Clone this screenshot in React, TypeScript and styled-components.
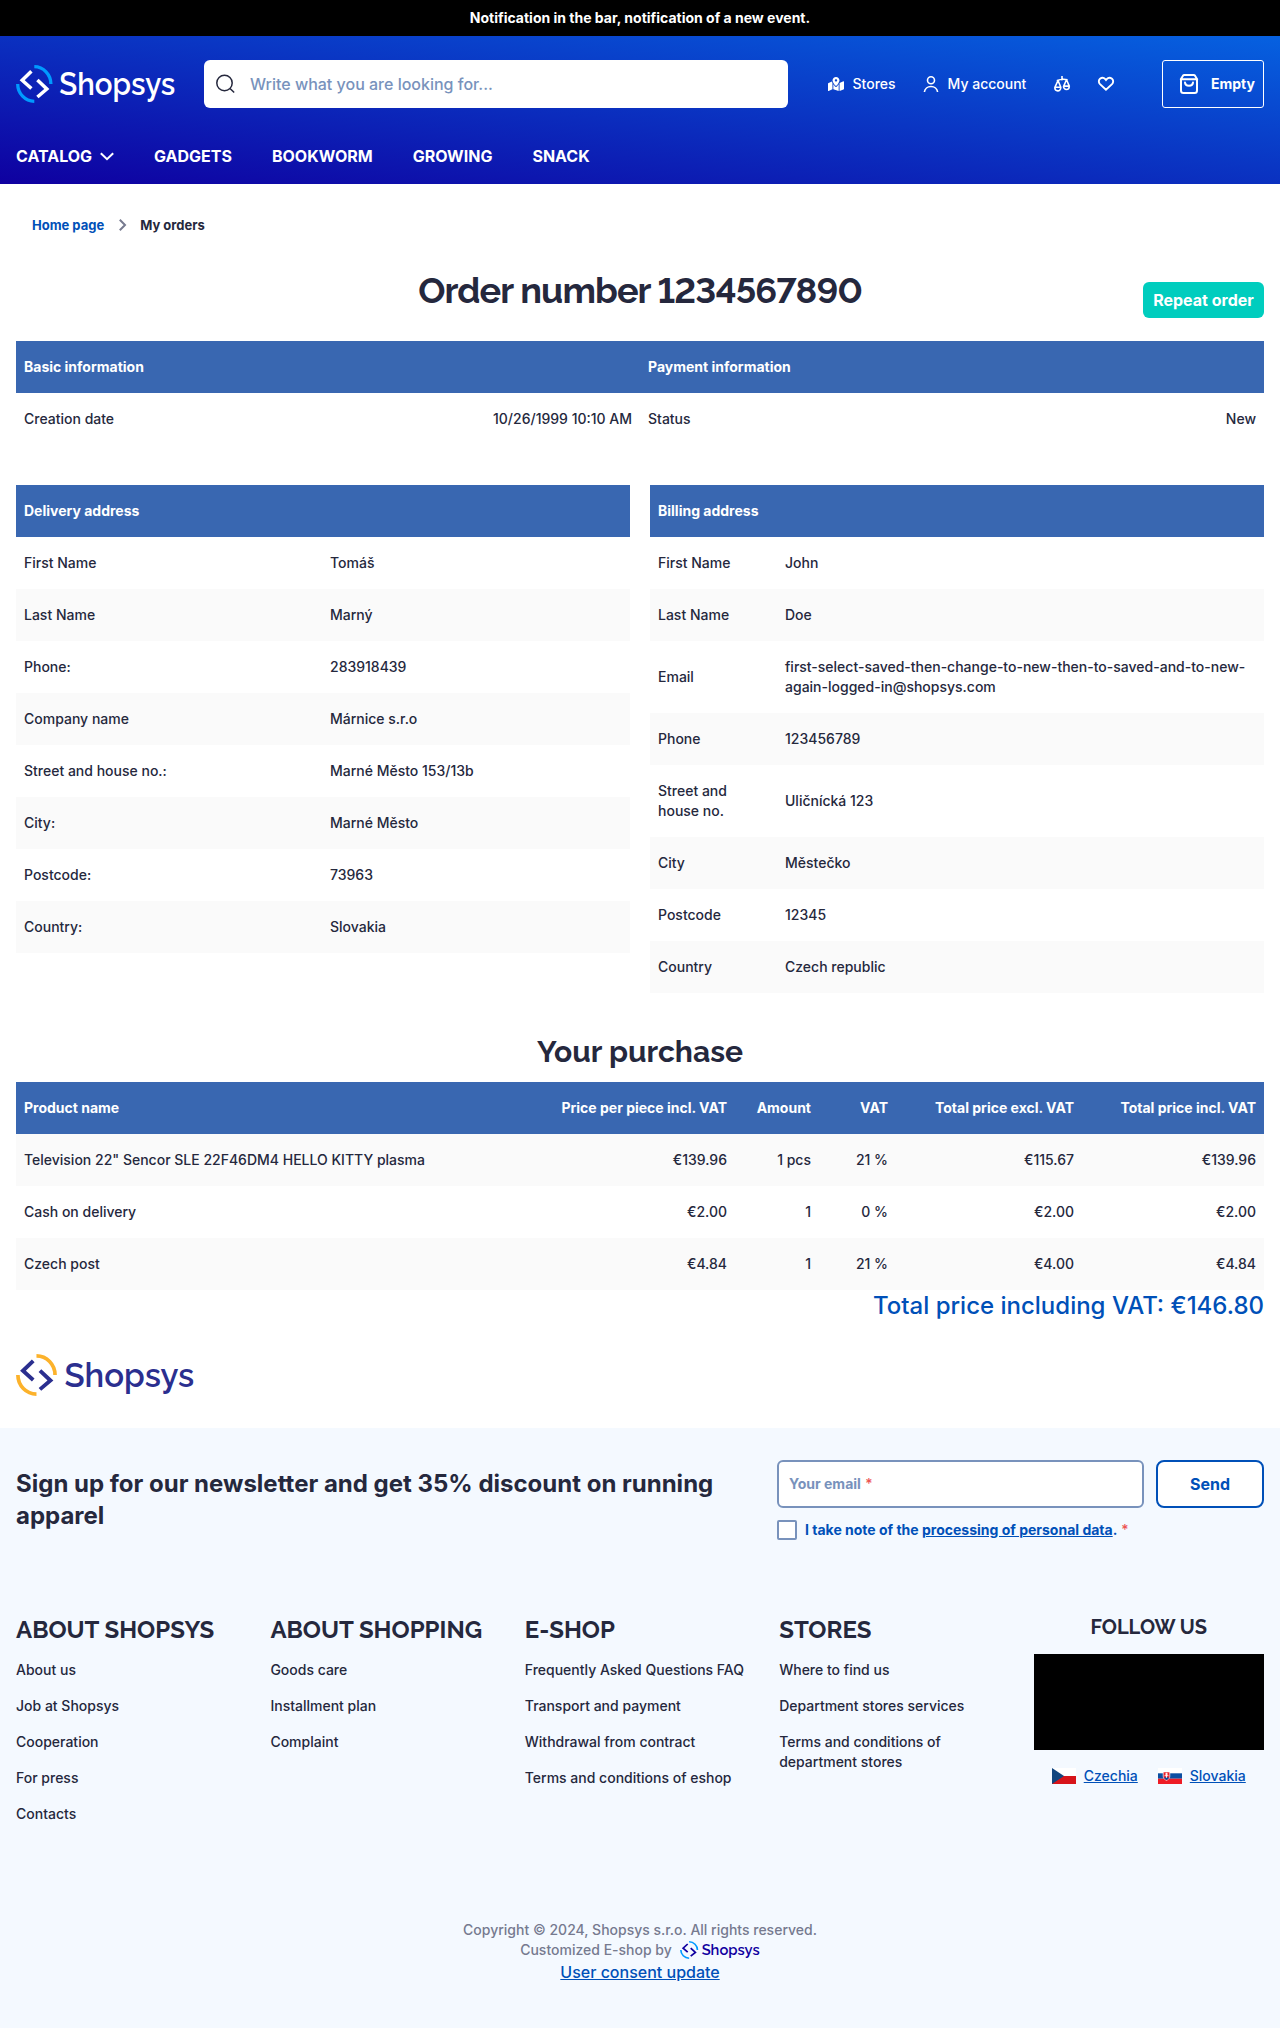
import React from 'react';
import styled, { createGlobalStyle } from 'styled-components';
import { FaMapMarkedAlt } from 'react-icons/fa';

const ink = '#25283d';
const link = '#0050b8';
const muted = '#7892bc';
const display = "Raleway, Lato, 'Open Sans', sans-serif";

const GlobalStyle = createGlobalStyle`
  *, *::before, *::after { box-sizing: border-box; }
  body {
    margin: 0;
    background: #fff;
    color: ${ink};
    font: 500 14px/20px Inter, 'Liberation Sans', sans-serif;
  }
  a { color: inherit; text-decoration: none; }
  h1, h2, h3, p, ul { margin: 0; padding: 0; }
  ul { list-style: none; }
  svg { display: block; flex: none; overflow: visible; }
`;

const Page = styled.div`
  width: 1280px;
  min-height: 2028px;
  display: flex;
  flex-direction: column;
`;

const Notification = styled.div`
  height: 36px;
  background: #000;
  color: #fff;
  font-weight: 700;
  line-height: 36px;
  text-align: center;
`;

const Header = styled.header`
  height: 148px;
  padding: 24px 16px 0;
  color: #fff;
  background: linear-gradient(to top right, #0f00a0 0%, #0661e0 100%);
`;

const HeaderTop = styled.div`
  display: flex;
  align-items: center;
  height: 48px;
`;

const Search = styled.label`
  display: flex;
  align-items: center;
  width: 584px;
  height: 48px;
  margin-left: 28px;
  padding-left: 12px;
  border-radius: 6px;
  background: #fff;
  color: ${ink};
`;

const SearchInput = styled.input`
  flex: 1;
  margin-left: 14px;
  padding: 0;
  border: 0;
  outline: 0;
  background: transparent;
  font: 500 16px/24px Inter, sans-serif;
  &::placeholder { color: ${muted}; opacity: 1; }
`;

const UserMenu = styled.nav`
  flex: 1;
  display: flex;
  align-items: center;
  margin-left: 40px;
`;

const MenuLink = styled.a<{ $gap: number }>`
  display: flex;
  align-items: center;
  gap: 8.5px;
  margin-right: ${(p) => p.$gap}px;
`;

const Cart = styled.a`
  display: flex;
  align-items: center;
  width: 102px;
  height: 48px;
  margin-left: auto;
  padding-left: 16px;
  border: 1px solid #fff;
  border-radius: 3px;
  font-weight: 700;
  gap: 12px;
`;

const MainNav = styled.nav`
  display: flex;
  gap: 40px;
  margin-top: 36px;
  font-size: 16px;
  font-weight: 700;
  line-height: 24px;
  text-transform: uppercase;
`;

const NavLink = styled.a`
  display: flex;
  align-items: center;
  gap: 8px;
`;

const Breadcrumbs = styled.nav`
  display: flex;
  align-items: center;
  height: 20px;
  margin: 31px 32px 0;
  font-size: 13px;
  font-weight: 700;
`;

const CrumbLink = styled.a`
  color: ${link};
`;

const CrumbArrow = styled.svg`
  margin: 0 14px 0 15px;
`;

const Main = styled.main`
  padding: 0 16px;
`;

const TitleRow = styled.div`
  display: grid;
  grid-template-columns: 1fr auto 1fr;
  align-items: start;
  height: 74px;
  margin-top: 32px;
`;

const Title = styled.h1`
  grid-column: 2;
  font: 700 36px/46px ${display};
  font-variant-numeric: lining-nums;
  letter-spacing: -0.025em;
`;

const Repeat = styled.button`
  justify-self: end;
  height: 36px;
  width: 121px;
  margin-top: 15px;
  padding: 0;
  border: 0;
  border-radius: 6px;
  background: #00cdbe;
  color: #fff;
  font: 700 16px/24px Inter, sans-serif;
`;

const Table = styled.table`
  width: 100%;
  border-collapse: collapse;
  border-spacing: 0;
  table-layout: fixed;
`;

const Head = styled.th<{ $right?: boolean }>`
  height: 52px;
  padding: 0 8px;
  background: #3967b1;
  color: #fff;
  font-weight: 700;
  text-align: ${(p) => (p.$right ? 'right' : 'left')};
`;

const Cell = styled.td<{ $right?: boolean }>`
  padding: 16px 8px;
  text-align: ${(p) => (p.$right ? 'right' : 'left')};
`;

const Row = styled.tr<{ $shade?: boolean }>`
  background: ${(p) => (p.$shade ? '#fafafa' : '#fff')};
`;

const Addresses = styled.div`
  display: grid;
  grid-template-columns: 1fr 1fr;
  align-items: start;
  gap: 20px;
  margin-top: 40px;
`;

const PurchaseTitle = styled.h2`
  margin-top: 40px;
  margin-bottom: 11px;
  font: 700 30px/38px ${display};
  text-align: center;
`;

const Total = styled.p`
  color: ${link};
  font-size: 24px;
  line-height: 32px;
  text-align: right;
`;

const PlainLogo = styled.div`
  margin: 32px 16px;
  height: 42px;
`;

const Footer = styled.footer`
  flex: 1;
  padding: 32px 16px 0;
  background: #f4f9ff;
`;

const Newsletter = styled.section`
  display: flex;
  justify-content: space-between;
  height: 150px;
`;

const NewsTitle = styled.h2`
  width: 730px;
  margin-top: 8px;
  font-size: 24px;
  font-weight: 700;
  line-height: 32px;
`;

const NewsForm = styled.form`
  width: 487px;
`;

const FormLine = styled.div`
  display: flex;
  gap: 12px;
`;

const Email = styled.label`
  flex: 1;
  height: 48px;
  padding: 12px 10px;
  border: 2px solid ${muted};
  border-radius: 6px;
  background: #fff;
  color: ${muted};
  font-weight: 700;
`;

const Send = styled.button`
  width: 108px;
  height: 48px;
  padding: 0;
  border: 2px solid ${link};
  border-radius: 8px;
  background: #fff;
  color: ${link};
  font: 700 16px/24px Inter, sans-serif;
`;

const Consent = styled.label`
  display: flex;
  align-items: center;
  gap: 8px;
  margin-top: 12px;
  color: ${link};
  font-weight: 700;
`;

const Box = styled.span`
  width: 20px;
  height: 20px;
  border: 2px solid ${muted};
  border-radius: 2px;
  background: #fff;
`;

const Star = styled.span`
  margin-left: 1px;
  color: #ec5353;
  font-weight: 500;
`;

const Underlined = styled.a`
  text-decoration: underline;
`;

const Columns = styled.section`
  display: grid;
  grid-template-columns: repeat(5, 230.4px);
  gap: 24px;
  height: 300px;
`;

const ColumnTitle = styled.h3`
  margin-top: 4px;
  font: 700 24px/32px ${display};
  white-space: nowrap;
  text-transform: uppercase;
`;

const LinkList = styled.ul`
  display: grid;
  gap: 16px;
  margin-top: 14px;
`;

const Social = styled.div`
  display: flex;
  flex-direction: column;
  align-items: center;
`;

const SocialTitle = styled.h3`
  margin-top: 4px;
  font: 700 20px/26px ${display};
  text-transform: uppercase;
`;

const SocialBlock = styled.div`
  width: 100%;
  height: 96px;
  margin-top: 14px;
  background: #000;
`;

const Countries = styled.div`
  display: flex;
  gap: 20px;
  margin-top: 16px;
  color: ${link};
`;

const Country = styled.div`
  display: flex;
  align-items: center;
  gap: 8px;
`;

const Legal = styled.section`
  display: flex;
  flex-direction: column;
  align-items: center;
  margin-top: 10px;
  color: #767a8f;
`;

const Credit = styled.div`
  display: flex;
  align-items: center;
  gap: 8px;
`;

const ConsentUpdate = styled.a`
  color: ${link};
  font-size: 16px;
  line-height: 24px;
  text-decoration: underline;
`;

interface LogoProps {
  width: number;
  height: number;
  mark: string;
  ring: string;
}

const Logo = ({ width, height, mark, ring }: LogoProps) => (
  <svg width={width} height={height} viewBox="0 0 160 38" preserveAspectRatio="none" aria-label="Shopsys">
    <g fill="none" strokeWidth="3.3">
      <path d="M18.3 1.7A16.7 17.3 0 0 1 34.9 19" stroke={ring} />
      <path d="M1.7 19A16.7 17.3 0 0 0 18.3 36.3" stroke={ring} />
      <path d="M15.4 6.3L6.2 15.2L15.4 23.5" stroke={mark} strokeWidth="3.5" />
      <path d="M21.4 15.1L30.8 24L21.4 32" stroke={mark} strokeWidth="3.5" />
    </g>
    <text
      x="43.3"
      y="29.9"
      fill={mark}
      fontFamily="Raleway, Lato, sans-serif"
      fontSize="31"
      fontWeight="600"
      textLength="116"
      lengthAdjust="spacingAndGlyphs"
    >
      Shopsys
    </text>
  </svg>
);

const SearchIcon = () => (
  <svg width="20" height="20" viewBox="0 0 20 20" fill="none" stroke="currentColor" strokeWidth="1.5">
    <circle cx="8.5" cy="9" r="7.7" />
    <path d="M14 14.5l4.2 4" />
  </svg>
);

const UserIcon = () => (
  <svg width="16" height="16" viewBox="0 0 16 16" fill="none" stroke="currentColor" strokeWidth="1.6">
    <circle cx="8" cy="4.2" r="3.5" />
    <path d="M1.4 16c.4-3.2 3.1-5.5 6.6-5.5s6.2 2.3 6.6 5.5" />
  </svg>
);

const CompareIcon = () => (
  <svg width="16" height="16" viewBox="0 0 16 16" fill="none" stroke="currentColor" strokeWidth="1.6">
    <path d="M8 0v4.5M2.8 4.8Q8 2.3 13.5 3.8" />
    <path d="M4 4.5L.9 11.3h5.9zM12.5 3.8L9.7 10.1h5.6z" strokeLinejoin="round" />
    <path d="M.8 11.6a3 3.3 0 0 0 6 0M9.5 10.2a2.9 3.3 0 0 0 5.8 0" />
  </svg>
);

const HeartIcon = () => (
  <svg width="16" height="14" viewBox="0 0 16 14" fill="none" stroke="currentColor" strokeWidth="1.9">
    <path d="M8 12.7L2 7.1C.4 5.5.5 3 2 1.7 3.7.4 6 .7 7.3 2.2L8 3l.7-.8C10 .7 12.3.4 14 1.7c1.5 1.3 1.6 3.8 0 5.4z" />
  </svg>
);

const CartIcon = () => (
  <svg width="20" height="20" viewBox="0 0 20 20" fill="none" stroke="currentColor" strokeWidth="2">
    <path d="M2 5v11.5Q2 19 4.5 19h11Q18 19 18 16.5V5" />
    <path d="M1.8 5.2L4 1.7Q4.5 1 5.3 1h9.4q.8 0 1.3.7l2.2 3.5z" strokeLinejoin="round" />
    <path d="M6 8.6c.4 4.3 7.6 4.3 8 0" strokeLinecap="round" />
  </svg>
);

const CzechFlag = () => (
  <svg width="24" height="16" viewBox="0 0 24 16">
    <path fill="#fff" d="M0 0h24v8H0z" />
    <path fill="#d7141a" d="M0 8h24v8H0z" />
    <path fill="#11457e" d="M0 0l12 8-12 8z" />
  </svg>
);

const SlovakFlag = () => (
  <svg width="24" height="16" viewBox="0 0 24 16">
    <path fill="#fff" d="M0 0h24v6H0z" />
    <path fill="#0b4ea2" d="M0 5.3h24v5.4H0z" />
    <path fill="#ee1c25" d="M0 10.7h24V16H0z" />
    <path fill="#ee1c25" stroke="#fff" strokeWidth=".7" d="M5.2 3.9h6.6v4.3c0 2.2-1.6 3.4-3.3 4.2-1.7-.8-3.3-2-3.3-4.2z" />
    <path fill="#0b4ea2" d="M6 10.1q1.2-1.2 2.5-.5 1.3-.7 2.5.5-.9 1.3-2.5 2-1.6-.7-2.5-2z" />
    <path stroke="#fff" strokeWidth=".9" d="M8.5 4.8v5M7 6h3M6.6 7.7h3.8" />
  </svg>
);

const delivery = [
  ['First Name', 'Tomáš'],
  ['Last Name', 'Marný'],
  ['Phone:', '283918439'],
  ['Company name', 'Márnice s.r.o'],
  ['Street and house no.:', 'Marné Město 153/13b'],
  ['City:', 'Marné Město'],
  ['Postcode:', '73963'],
  ['Country:', 'Slovakia'],
];

const billing = [
  ['First Name', 'John'],
  ['Last Name', 'Doe'],
  ['Email', 'first-select-saved-then-change-to-new-then-to-saved-and-to-new-again-logged-in@shopsys.com'],
  ['Phone', '123456789'],
  ['Street and house no.', 'Uličnícká 123'],
  ['City', 'Městečko'],
  ['Postcode', '12345'],
  ['Country', 'Czech republic'],
];

const purchaseHead = ['Product name', 'Price per piece incl. VAT', 'Amount', 'VAT', 'Total price excl. VAT', 'Total price incl. VAT'];
const purchaseWidths = [508, 211, 84, 77, 186, 182];
const purchases = [
  ['Television 22" Sencor SLE 22F46DM4 HELLO KITTY plasma', '€139.96', '1 pcs', '21 %', '€115.67', '€139.96'],
  ['Cash on delivery', '€2.00', '1', '0 %', '€2.00', '€2.00'],
  ['Czech post', '€4.84', '1', '21 %', '€4.00', '€4.84'],
];

const footerColumns = [
  { title: 'About Shopsys', links: ['About us', 'Job at Shopsys', 'Cooperation', 'For press', 'Contacts'] },
  { title: 'About shopping', links: ['Goods care', 'Installment plan', 'Complaint'] },
  {
    title: 'E-shop',
    links: ['Frequently Asked Questions FAQ', 'Transport and payment', 'Withdrawal from contract', 'Terms and conditions of eshop'],
  },
  { title: 'Stores', links: ['Where to find us', 'Department stores services', 'Terms and conditions of department stores'] },
];

const AddressTable = ({ title, rows, labelWidth }: { title: string; rows: string[][]; labelWidth: number }) => (
  <Table>
    <colgroup>
      <col width={labelWidth} />
      <col />
    </colgroup>
    <thead>
      <tr>
        <Head colSpan={2}>{title}</Head>
      </tr>
    </thead>
    <tbody>
      {rows.map(([label, value], i) => (
        <Row key={label} $shade={i % 2 === 1}>
          <Cell>{label}</Cell>
          <Cell>{value}</Cell>
        </Row>
      ))}
    </tbody>
  </Table>
);

export default function App() {
  return (
    <Page>
      <GlobalStyle />
      <Notification>Notification in the bar, notification of a new event.</Notification>
      <Header>
        <HeaderTop>
          <Logo width={160} height={38} mark="#fff" ring="#009aff" />
          <Search>
            <SearchIcon />
            <SearchInput placeholder="Write what you are looking for..." />
          </Search>
          <UserMenu>
            <MenuLink $gap={27.5} href="#">
              <FaMapMarkedAlt size={16} />
              Stores
            </MenuLink>
            <MenuLink $gap={27.5} href="#">
              <UserIcon />
              My account
            </MenuLink>
            <MenuLink $gap={28} href="#" aria-label="Compare">
              <CompareIcon />
            </MenuLink>
            <MenuLink $gap={0} href="#" aria-label="Wishlist">
              <HeartIcon />
            </MenuLink>
            <Cart href="#">
              <CartIcon />
              Empty
            </Cart>
          </UserMenu>
        </HeaderTop>
        <MainNav>
          <NavLink href="#">
            Catalog
            <svg width="14" height="9" viewBox="0 0 14 9" fill="none" stroke="currentColor" strokeWidth="2">
              <path d="M.8 1.2l6.2 6 6.2-6" />
            </svg>
          </NavLink>
          {['Gadgets', 'Bookworm', 'Growing', 'Snack'].map((item) => (
            <NavLink key={item} href="#">
              {item}
            </NavLink>
          ))}
        </MainNav>
      </Header>
      <Breadcrumbs>
        <CrumbLink href="#">Home page</CrumbLink>
        <CrumbArrow width="7" height="12" viewBox="0 0 7 12" fill="none" stroke="#767a8f" strokeWidth="2">
          <path d="M.8.8L6 6 .8 11.2" />
        </CrumbArrow>
        <span>My orders</span>
      </Breadcrumbs>
      <Main>
        <TitleRow>
          <Title>Order number 1234567890</Title>
          <Repeat>Repeat order</Repeat>
        </TitleRow>
        <Table>
          <thead>
            <tr>
              <Head colSpan={2}>Basic information</Head>
              <Head colSpan={2}>Payment information</Head>
            </tr>
          </thead>
          <tbody>
            <Row>
              <Cell>Creation date</Cell>
              <Cell $right>10/26/1999 10:10 AM</Cell>
              <Cell>Status</Cell>
              <Cell $right>New</Cell>
            </Row>
          </tbody>
        </Table>
        <Addresses>
          <AddressTable title="Delivery address" rows={delivery} labelWidth={306} />
          <AddressTable title="Billing address" rows={billing} labelWidth={127} />
        </Addresses>
        <PurchaseTitle>Your purchase</PurchaseTitle>
        <Table>
          <colgroup>
            {purchaseWidths.map((width, i) => (
              <col key={i} width={width} />
            ))}
          </colgroup>
          <thead>
            <tr>
              {purchaseHead.map((text, i) => (
                <Head key={text} $right={i > 0}>
                  {text}
                </Head>
              ))}
            </tr>
          </thead>
          <tbody>
            {purchases.map((cells, r) => (
              <Row key={cells[0]} $shade={r % 2 === 0}>
                {cells.map((text, i) => (
                  <Cell key={i} $right={i > 0}>
                    {text}
                  </Cell>
                ))}
              </Row>
            ))}
          </tbody>
        </Table>
        <Total>Total price including VAT: €146.80</Total>
      </Main>
      <PlainLogo>
        <Logo width={179} height={42} mark="#2b2f8f" ring="#fcb22b" />
      </PlainLogo>
      <Footer>
        <Newsletter>
          <NewsTitle>Sign up for our newsletter and get 35% discount on running apparel</NewsTitle>
          <NewsForm>
            <FormLine>
              <Email>
                Your email <Star>*</Star>
              </Email>
              <Send type="button">Send</Send>
            </FormLine>
            <Consent>
              <Box />
              <span>
                I take note of the <Underlined href="#">processing of personal data</Underlined>. <Star>*</Star>
              </span>
            </Consent>
          </NewsForm>
        </Newsletter>
        <Columns>
          {footerColumns.map((column) => (
            <div key={column.title}>
              <ColumnTitle>{column.title}</ColumnTitle>
              <LinkList>
                {column.links.map((text) => (
                  <li key={text}>
                    <a href="#">{text}</a>
                  </li>
                ))}
              </LinkList>
            </div>
          ))}
          <Social>
            <SocialTitle>Follow us</SocialTitle>
            <SocialBlock />
            <Countries>
              <Country>
                <CzechFlag />
                <Underlined href="#">Czechia</Underlined>
              </Country>
              <Country>
                <SlovakFlag />
                <Underlined href="#">Slovakia</Underlined>
              </Country>
            </Countries>
          </Social>
        </Columns>
        <Legal>
          <div>Copyright © 2024, Shopsys s.r.o. All rights reserved.</div>
          <Credit>
            Customized E-shop by
            <Logo width={80} height={18} mark="#1000a0" ring="#009aff" />
          </Credit>
          <ConsentUpdate href="#">User consent update</ConsentUpdate>
        </Legal>
      </Footer>
    </Page>
  );
}
